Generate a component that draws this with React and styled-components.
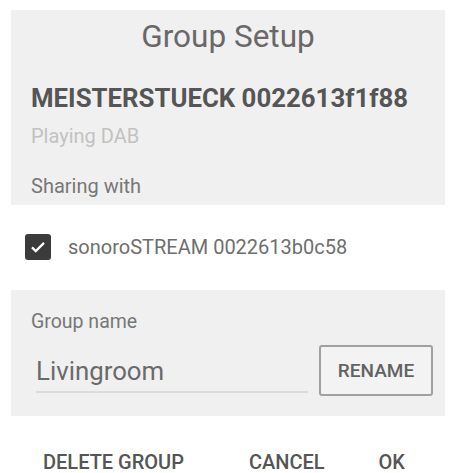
import React from "react";
import styled, { createGlobalStyle } from "styled-components";

const GlobalStyle = createGlobalStyle`
  html, body {
    margin: 0;
    padding: 0;
    background: #ffffff;
    font-family: Roboto, "Liberation Sans", Arial, sans-serif;
  }
`;

const Dialog = styled.div`
  width: 451px;
  height: 473px;
  padding: 10px 6px 0 11px;
  box-sizing: border-box;
  background: #ffffff;
`;

const Panel = styled.div`
  background: #f0f0f0;
  padding: ${(p) => p.$pad};
  margin-top: ${(p) => p.$top || 0}px;
  display: flex;
  flex-direction: column;
`;

const Title = styled.h1`
  margin: 0;
  font-size: 31.5px;
  font-weight: 400;
  line-height: 40px;
  text-align: center;
  color: #686868;
`;

const DeviceName = styled.div`
  margin-top: 26px;
  font-size: 25.8px;
  font-weight: 700;
  line-height: 30px;
  color: #555555;
`;

const Line = styled.div`
  margin-top: ${(p) => p.$top}px;
  font-size: ${(p) => p.$size || 20}px;
  line-height: 24px;
  color: ${(p) => p.$color};
`;

const CheckRow = styled.label`
  display: flex;
  align-items: center;
  gap: 17px;
  height: 40px;
  margin: 22px 0 0 14px;
  font-size: 20px;
  color: #6e6e6e;
`;

const Box = styled.span`
  width: 26px;
  height: 26px;
  border-radius: 3px;
  background: #3b3b3b;
  display: flex;
  align-items: center;
  justify-content: center;
  flex-shrink: 0;
`;

const NameRow = styled.div`
  display: flex;
  align-items: center;
  gap: 11px;
  margin-top: 11px;
`;

const NameInput = styled.div`
  flex: 1;
  margin-left: 5px;
  height: 44px;
  display: flex;
  align-items: center;
  font-size: 25.8px;
  color: #6a6a6a;
  border-bottom: 2px solid #dcdcdc;
  box-sizing: border-box;
  padding-top: 2px;
`;

const RenameButton = styled.button`
  width: 114px;
  height: 51px;
  border: 2px solid #a0a0a0;
  border-radius: 3px;
  background: #f3f3f3;
  font-family: inherit;
  font-size: 19px;
  font-weight: 500;
  color: #626262;
  padding: 0;
`;

const Actions = styled.div`
  display: flex;
  align-items: center;
  height: 40px;
  margin-top: 26px;
  padding: 0 40px 0 32px;
`;

const ActionButton = styled.button`
  border: none;
  background: none;
  padding: 0;
  font-family: inherit;
  font-size: 20px;
  font-weight: 500;
  color: #555555;
  margin-left: ${(p) => p.$gap || 0}px;
  margin-right: ${(p) => (p.$push ? "auto" : "0")};
`;

const Check = () => (
  <svg width="18" height="18" viewBox="0 0 24 24" fill="none">
    <path d="M4 12.5l5 5L20 6.5" stroke="#ffffff" strokeWidth="3" />
  </svg>
);

export default function App() {
  return (
    <>
      <GlobalStyle />
      <Dialog>
        <Panel $pad="7px 20px 7px 20px">
          <Title>Group Setup</Title>
          <DeviceName>MEISTERSTUECK 0022613f1f88</DeviceName>
          <Line $top={11} $color="#c2c2c2">Playing DAB</Line>
          <Line $top={26} $color="#777777">Sharing with</Line>
        </Panel>
        <CheckRow>
          <Box>
            <Check />
          </Box>
          sonoroSTREAM 0022613b0c58
        </CheckRow>
        <Panel $pad="20px 12px 20px 20px" $top={23}>
          <Line $top={0} $size={19.5} $color="#777777">Group name</Line>
          <NameRow>
            <NameInput>Livingroom</NameInput>
            <RenameButton>RENAME</RenameButton>
          </NameRow>
        </Panel>
        <Actions>
          <ActionButton $push>DELETE GROUP</ActionButton>
          <ActionButton>CANCEL</ActionButton>
          <ActionButton $gap={54}>OK</ActionButton>
        </Actions>
      </Dialog>
    </>
  );
}
